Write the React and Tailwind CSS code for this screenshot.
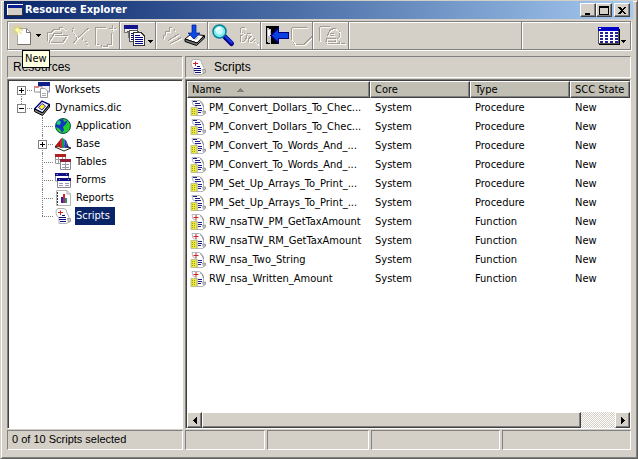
import React, { useState } from "react";

const toolIcon = "h-6 w-6 shrink-0";

/* ---------- toolbar icons ---------- */

// Disabled glyph: grey strokes with a white highlight below and to the right
const Embossed = ({ d, className = toolIcon }) => (
  <svg viewBox="0 0 24 24" className={className} fill="none" shapeRendering="crispEdges">
    <path d={d} stroke="#a19d96" />
    <path d={d} stroke="#f8f7f4" transform="translate(1 1)" />
  </svg>
);

const openPath = "M2.500 17V8.500H6L9 5.500H14V3.500H17L20.500 6M3.500 18.500L8 11.500H22.500L17.500 18.500H3.500M8.500 11V9.500H16.500V8";
const deletePath = "M3 4.500H5M3 6.500L8 13.500M19.500 4L13.500 9.500L8.500 14M8.500 14L4.500 19M13.500 14V16M16 17.500H18M17 20.500H19";
const addPath = "M13 3.500H2.500V20.500H6M14.500 20.500H18.500V9M19.500 1V7M16 4.500H23M8 20.500V22.500H14V20";
const comparePath = "M3.500 15V11H5L5.500 7.500H9.500V3.500H12M14.500 5V7M8 16.500L19.500 9.500M10 19.500L21.500 13.500";
const replacePath = "M5 3.500H8L9.500 5M4.500 4V8L8 9.500L4.500 12V17H8L10.500 14V11M11 9.500H14L15.500 12L12.500 15V17H16L18.500 14.500M18 17L22 20.500";
const exportPath = "M3 3.500H18M2.500 4V15L5 18.500V20.500H15L23.500 12";
const printPath = "M3 2.500H13M2.500 3V16H4M10.500 12L12.500 6.500H14M13 5.500L18 4.500L22.500 8V12L20.500 15M8 17.500H18.500V14.500H9.500V19.500H22M22 17V19.500H27V21M13 9.500H17M12 11.500H17";

const NewIcon = () => (
  <svg viewBox="0 0 24 24" className={toolIcon}>
    <path d="M5.500 4.500H14.500L18.500 8.500V20.500H5.500Z" fill="#fff" stroke="#aaa79f" />
    <path d="M14.500 4.500V8.500H18.500V20.500H5.500" fill="none" stroke="#77746e" />
    <path d="M5.500 1V11M0 6H11M1.500 2L9.500 10M9.500 2L1.500 10" stroke="#ddd545" />
    <path d="M5.500 3.500L8 6L5.500 8.500L3 6Z" fill="#ffffa0" />
  </svg>
);

const ResourceListIcon = () => (
  <svg viewBox="0 0 24 24" className={toolIcon} shapeRendering="crispEdges">
    <path d="M.5 1.500H13.500V13H4V8H.5Z" fill="#eee" stroke="#777" />
    <path d="M0 1H14V5H0Z" fill="#14148c" />
    <path d="M3 7.500H9M5 10.500H9" stroke="#555" />
    <path d="M5.500 6.500H13L16.500 10V17.500H5.500Z" fill="#fff" stroke="#555" />
    <path d="M9.500 8.500H17L20.500 12V21.500H9.500Z" fill="#fff" stroke="#333" />
    <path d="M7 9.500H9M7 11.500H9M7 13.500H9M7 15.500H9M11 11.500H16M11 13.500H19M11 15.500H19M11 17.500H19M11 19.500H19" stroke="#000080" />
  </svg>
);

const ImportIcon = () => (
  <svg viewBox="0 0 24 24" className={toolIcon}>
    <path d="M1 15L7 10L20 11.500L13 19Z" fill="#fff" stroke="#000" />
    <path d="M1 15V17.500L12.500 21.500L20.500 14V11.500L13 19Z" fill="#777" stroke="#000" />
    <path d="M7 14L10 12L15 13L12 16Z" fill="#c8c8c8" />
    <path d="M8 1H12V9H16L10 15L4 9H8Z" fill="#0a4be8" stroke="#00188f" strokeWidth=".7" />
  </svg>
);

const FindIcon = () => (
  <svg viewBox="0 0 24 24" className={toolIcon}>
    <path d="M13 13L19.500 19.500" stroke="#000080" strokeWidth="5" strokeLinecap="round" />
    <path d="M14 13L19.500 18.500" stroke="#1736e8" strokeWidth="2.500" strokeLinecap="round" />
    <circle cx="7.500" cy="7.500" r="6.500" fill="#7fe9f2" stroke="#087f93" strokeWidth="1.500" />
    <circle cx="7.500" cy="7" r="3.500" fill="#c9fbff" />
    <path d="M4 7Q5 3.500 8.500 4" stroke="#fff" strokeWidth="2" fill="none" />
  </svg>
);

const DoorIcon = () => (
  <svg viewBox="0 0 24 24" className={toolIcon} shapeRendering="crispEdges">
    <path d="M1 2H14V20H1Z" fill="#000" />
    <path d="M2 4L6 5V20L2 18Z" fill="#c4c4c4" />
    <path d="M3 6H5V12H3Z" fill="#fff" />
    <path d="M6 11.500L13 4.500V8.500H23V14.500H13V18.500Z" fill="#0a3fe0" stroke="#000080" />
  </svg>
);

const GridIcon = () => (
  <svg viewBox="0 0 24 20" className="h-5 w-6 shrink-0" shapeRendering="crispEdges">
    <path d="M1.500 1.500H21.500V17.500H1.500Z" fill="#fff" stroke="#555" />
    <path d="M1 1H22V5H1Z" fill="#0000c8" />
    <path d="M2 2.500H4" stroke="#fff" />
    <path d="M22.500 3V18.500H2" stroke="#000" fill="none" />
    <path d="M3 7H21M3 10H21M3 13H21M3 16H21" stroke="#20209a" strokeWidth="2" strokeDasharray="3 2" />
  </svg>
);

const DropArrow = () => (
  <svg viewBox="0 0 5 3" className="h-[3px] w-[5px]" shapeRendering="crispEdges">
    <path d="M0 0H5L2.500 3Z" fill="#000" />
  </svg>
);

/* ---------- resource icons ---------- */

const Icon16 = ({ children }) => (
  <svg viewBox="0 0 16 16" className="h-4 w-4 shrink-0">
    {children}
  </svg>
);

const WorksetsIcon = () => (
  <Icon16>
    <path d="M4.500 .5H15.500V10H4.500Z" fill="#eef" stroke="#889" />
    <path d="M4 0H16V4H4Z" fill="#102088" />
    <path d="M.5 4.500H8V10H.5Z" fill="#fff" stroke="#999" />
    <path d="M0 4H5V6H0Z" fill="#e08080" />
    <path d="M6.500 6.500H11L13.500 9V15.500H6.500Z" fill="#fff" stroke="#999" />
    <path d="M8 11.500H12M8 13.500H12" stroke="#aaa" />
  </Icon16>
);

const DictionaryIcon = () => (
  <Icon16>
    <path d="M.5 9L8 1L15.500 4.500L8.500 13Z" fill="#fff" stroke="#000080" strokeWidth="1.400" />
    <path d="M.5 9V11.500L8.500 15.500L15.500 7V4.500L8.500 13Z" fill="#888" stroke="#000" />
    <path d="M8 3.500L11.500 6L8 10L4.500 7.500Z" fill="#ffee22" stroke="#1c34b0" />
  </Icon16>
);

const ApplicationIcon = () => (
  <Icon16>
    <circle cx="8" cy="8" r="7.500" fill="#1fce2c" stroke="#1a4a60" />
    <path d="M4 2L8 1L9 4L13 2L11 6L8 9L9 12L7 15L5 11L1 9L1 6L5 7L6 4Z" fill="#1038c0" />
    <path d="M2 4L4 3L5 5L3 7Z" fill="#20c8c0" />
  </Icon16>
);

const BaseIcon = () => (
  <Icon16>
    <path d="M0 11L5 8L16 12L9 15Z" fill="#fff" stroke="#222" />
    <path d="M0 10.500L5 4.500V11Z" fill="#c01818" stroke="#400" strokeWidth=".5" />
    <path d="M5 12V3.500L7.500 1.500V12Z" fill="#d02828" />
    <path d="M7 12V2L9.500 3V12Z" fill="#12985a" />
    <path d="M9.500 12V3L11.500 5V12Z" fill="#2430c8" />
    <path d="M11.500 12V5L14 12Z" fill="#222266" />
  </Icon16>
);

const TablesIcon = () => (
  <Icon16>
    <path d="M.5 .5H10.500V9.500H.5Z" fill="#fff" stroke="#999" />
    <path d="M0 0H11V3H0Z" fill="#b02020" />
    <path d="M1 5.500H5M3.500 3V9M7.500 3V5" stroke="#999" />
    <path d="M5.500 5.500H15.500V15.500H5.500Z" fill="#fff" stroke="#889" />
    <path d="M5 5H16V8H5Z" fill="#8f2038" />
    <path d="M7 10.500H14M7 13.500H14M10.500 8V15" stroke="#99a" />
  </Icon16>
);

const FormsIcon = () => (
  <Icon16>
    <path d="M.5 1.500H13.500V9H.5Z" fill="#fff" stroke="#889" />
    <path d="M0 1H14V4H0Z" fill="#101080" />
    <path d="M2.500 6.500H15.500V15.500H2.500Z" fill="#fff" stroke="#889" />
    <path d="M2 6H16V9H2Z" fill="#101080" />
    <path d="M4 11.500H8M10 11.500H14M4 13.500H8M10 13.500H14M1.500 2.500H3M11 2.500H12M4 7.500H5M13 7.500H14" stroke="#8f99b8" />
  </Icon16>
);

const ReportsIcon = () => (
  <Icon16>
    <path d="M1.500 .5H12L15.500 4V15.500H1.500Z" fill="#fff" stroke="#b4b4b4" />
    <path d="M12 .5V4H15.500" fill="none" stroke="#aaa" />
    <path d="M2.500 2V15" stroke="#333" strokeDasharray="2 1" />
    <path d="M6 7H8V13H6Z" fill="#1428c8" />
    <path d="M8 4H10V13H8Z" fill="#e02020" />
    <path d="M10 8H12V13H10Z" fill="#0f9a8a" />
  </Icon16>
);

const ScriptsIcon = () => (
  <Icon16>
    <path d="M3 .5H9Q12 1 12 5L14 9V13L12 15.500H4V10L1.500 7Q0 2 3 .5Z" fill="#fff" stroke="#b0b0b4" />
    <path d="M5.500 2.500V7M3 4.500H8" stroke="#d02020" />
    <path d="M7 7.500H10M4 9.500H11M4 11.500H11M5 13.500H11" stroke="#101080" />
    <path d="M12.500 10.500H15.500V13.500L13.500 14.500Z" fill="#ccc" stroke="#888" strokeWidth=".7" />
  </Icon16>
);

const ScriptItemIcon = ({ kind }) => (
  <Icon16>
    <path d="M2 .5H9.500Q13 2 13.500 6V11H15.500V13L13 15.500H7V7L3 5Z" fill="#fff" stroke="#b4b4bc" />
    {kind === "Procedure" ? (
      <path d="M3 1.500H7M5 3.500H10M5 5.500H11M8 8.500H12M8 10.500H12M8 12.500H11" stroke="#20208c" />
    ) : (
      <>
        <path d="M6 1V6M3.500 3.500H8.500" stroke="#d02020" />
        <path d="M8 8.500H12M8 10.500H12M8 12.500H11" stroke="#20208c" />
      </>
    )}
    <path d="M10 1.500Q13 3 13.500 7" fill="none" stroke="#8a8a94" />
    <path d="M1 7.500H7V15.500H1Z" fill="#eeea40" stroke="#a8a878" strokeWidth=".7" />
    <path d="M2 9.500H6M2 11.500H6M2 13.500H6" stroke="#9a9c14" strokeDasharray="1 1" />
    <path d="M12.500 11.500H15.500V13L13.500 14.500Z" fill="#c4c4cc" stroke="#888" strokeWidth=".6" />
  </Icon16>
);

/* ---------- data ---------- */

const resources = [
  { name: "Worksets", level: 0, icon: WorksetsIcon, expander: "+", first: true },
  { name: "Dynamics.dic", level: 0, icon: DictionaryIcon, expander: "-", last: true },
  { name: "Application", level: 1, icon: ApplicationIcon },
  { name: "Base", level: 1, icon: BaseIcon, expander: "+" },
  { name: "Tables", level: 1, icon: TablesIcon },
  { name: "Forms", level: 1, icon: FormsIcon },
  { name: "Reports", level: 1, icon: ReportsIcon },
  { name: "Scripts", level: 1, icon: ScriptsIcon, last: true },
];

const scripts = [
  { name: "PM_Convert_Dollars_To_Chec...", type: "Procedure" },
  { name: "PM_Convert_Dollars_To_Chec...", type: "Procedure" },
  { name: "PM_Convert_To_Words_And_...", type: "Procedure" },
  { name: "PM_Convert_To_Words_And_...", type: "Procedure" },
  { name: "PM_Set_Up_Arrays_To_Print_...", type: "Procedure" },
  { name: "PM_Set_Up_Arrays_To_Print_...", type: "Procedure" },
  { name: "RW_nsaTW_PM_GetTaxAmount", type: "Function" },
  { name: "RW_nsaTW_RM_GetTaxAmount", type: "Function" },
  { name: "RW_nsa_Two_String", type: "Function" },
  { name: "RW_nsa_Written_Amount", type: "Function" },
];

/* ---------- building blocks ---------- */

const raised =
  "bg-[#d4d0c8] border border-t-white border-l-white border-r-[#404040] border-b-[#404040] shadow-[inset_-1px_-1px_0_#808080]";
const sunken = "border border-t-[#808080] border-l-[#808080] border-r-white border-b-white";
const well = "border border-t-[#808080] border-l-[#808080] border-r-white border-b-white bg-white";

const WindowButton = ({ label, children }) => (
  <button aria-label={label} className={`flex h-[14px] w-4 items-center justify-center ${raised}`}>
    <svg viewBox="0 0 10 9" className="h-[9px] w-[10px]" shapeRendering="crispEdges">
      {children}
    </svg>
  </button>
);

const ToolGroup = ({ className, children }) => (
  <div className={`flex items-center border-l border-[#808080] pl-1 shadow-[inset_1px_0_0_#fff] ${className}`}>
    {children}
  </div>
);

const ToolButton = ({ label, menu, disabled, children }) => (
  <button aria-label={label} disabled={disabled} className="flex shrink-0 items-center">
    {children}
    {menu && (
      <span className={menu === "low" ? "pt-3" : ""}>
        <DropArrow />
      </span>
    )}
  </button>
);

const Guide = ({ item }) => (
  <span className="relative flex h-[18px] w-[21px] shrink-0 items-center pl-1">
    <span
      className={`absolute left-2 border-l border-dotted border-[#808080] ${
        item.first ? "top-[9px] h-[9px]" : item.last ? "top-0 h-[9px]" : "top-0 h-[18px]"
      }`}
    />
    <span className="absolute left-2 top-[9px] w-[11px] border-t border-dotted border-[#808080]" />
    {item.expander && (
      <svg viewBox="0 0 9 9" className="relative h-[9px] w-[9px]" shapeRendering="crispEdges">
        <path d="M.5 .5H8.500V8.500H.5Z" fill="#fff" stroke="#808080" />
        <path d={item.expander === "+" ? "M2 4.500H7M4.500 2V7" : "M2 4.500H7"} stroke="#000" />
      </svg>
    )}
  </span>
);

const ResourceTree = ({ selected, onSelect }) => (
  <ul className={`${well} min-h-0 flex-1 overflow-hidden pl-[5px] pt-px shadow-[inset_1px_1px_0_#404040]`}>
    {resources.map((item) => {
      const ItemIcon = item.icon;
      return (
        <li key={item.name} className="flex h-[18px] items-center">
          {item.level === 1 && <span className="w-[21px] shrink-0" />}
          <Guide item={item} />
          <button onClick={() => onSelect(item.name)} className="flex h-[18px] items-center gap-1">
            <ItemIcon />
            <span
              className={`h-[18px] px-px leading-[18px] ${
                selected === item.name ? "bg-[#0a246a] pr-[5px] text-white" : ""
              }`}
            >
              {item.name}
            </span>
          </button>
        </li>
      );
    })}
  </ul>
);

const th = `h-[17px] p-0 pl-1 text-left font-normal leading-[15px] border border-t-white border-l-white border-r-[#404040] border-b-[#404040] bg-[#c1beb3] shadow-[inset_-1px_-1px_0_#808080]`;

const ScriptTable = () => (
  <table className="w-full table-fixed border-separate border-spacing-0">
    <colgroup>
      <col className="w-[183px]" />
      <col className="w-[100px]" />
      <col className="w-[100px]" />
      <col />
    </colgroup>
    <thead>
      <tr>
        <th className={th}>
          <span className="flex items-center gap-4">
            Name
            <svg viewBox="0 0 7 4" className="h-1 w-[7px]" shapeRendering="crispEdges">
              <path d="M0 4H7L3.500 0Z" fill="#808080" />
            </svg>
          </span>
        </th>
        <th className={th}>Core</th>
        <th className={th}>Type</th>
        <th className={`${th} whitespace-nowrap`}>SCC State</th>
      </tr>
    </thead>
    <tbody>
      {scripts.map((script, i) => (
        <tr key={i} className="h-[19px]">
          <td className="p-0 pl-[3px]">
            <span className="flex items-center gap-[3px] whitespace-nowrap">
              <ScriptItemIcon kind={script.type} />
              {script.name}
            </span>
          </td>
          <td className="p-0 pl-[5px]">System</td>
          <td className="p-0 pl-[5px]">{script.type}</td>
          <td className="p-0 pl-[5px]">New</td>
        </tr>
      ))}
    </tbody>
  </table>
);

const ScrollBar = () => (
  <div className="flex h-4 bg-[repeating-conic-gradient(#fff_0_25%,#d4d0c8_0_50%)] bg-[length:2px_2px]">
    <button aria-label="Scroll left" className={`flex w-[15px] items-center justify-center ${raised}`}>
      <svg viewBox="0 0 4 7" className="h-[7px] w-1" shapeRendering="crispEdges">
        <path d="M4 0V7L0 3.500Z" />
      </svg>
    </button>
    <div className="flex flex-1">
      <div className={`w-11/12 ${raised}`} />
    </div>
    <button aria-label="Scroll right" className={`flex w-[15px] items-center justify-center ${raised}`}>
      <svg viewBox="0 0 4 7" className="h-[7px] w-1" shapeRendering="crispEdges">
        <path d="M0 0V7L4 3.500Z" />
      </svg>
    </button>
  </div>
);

const App = () => {
  const [selected, setSelected] = useState("Scripts");

  return (
    <div className="flex h-screen flex-col border border-t-[#d4d0c8] border-l-[#d4d0c8] border-r-[#606060] border-b-[#606060] bg-[#d4d0c8] pb-2 pl-[3px] pr-1 font-['DejaVu_Sans_Condensed','DejaVu_Sans',sans-serif] text-[11px] leading-4 text-black shadow-[inset_1px_1px_0_#fff,inset_-1px_-1px_0_#808080]">
      {/* Title bar */}
      <header className="flex h-[18px] shrink-0 items-center bg-linear-to-r from-[#0a246a] to-[#a6caf0] pl-[3px] pr-[3px]">
        <svg viewBox="0 0 16 12" className="mr-[2px] h-3 w-4" shapeRendering="crispEdges">
          <path d="M.5 .5H15.500V11.500H.5Z" fill="#d4d0c8" stroke="#fff" />
          <path d="M1 1H15V4H1Z" fill="#0a1c90" />
          <path d="M15.500 1V11.500H0" stroke="#333" fill="none" />
        </svg>
        <h1 className="flex-1 font-bold leading-[18px] text-white">Resource Explorer</h1>
        <WindowButton label="Minimize">
          <path d="M2 7H7V9H2Z" />
        </WindowButton>
        <WindowButton label="Maximize">
          <path d="M.5 .5H9.500V8.500H.5ZM0 1.500H10" fill="none" stroke="#000" />
        </WindowButton>
        <span className="w-[2px]" />
        <WindowButton label="Close">
          <path d="M1 1H3L5 3L7 1H9L6 4.500L9 8H7L5 6L3 8H1L4 4.500Z" />
        </WindowButton>
      </header>

      <div className="flex min-h-0 flex-1 flex-col pl-[3px] pr-[2px] pt-[2px]">
        {/* Toolbar */}
        <div className="flex h-[29px] shrink-0 border-y border-r border-[#808080] shadow-[1px_1px_0_#fff,inset_0_1px_0_#fff]">
          <ToolGroup className="relative w-[112px]">
            <ToolButton label="New" menu="mid">
              <NewIcon />
            </ToolButton>
            <span className="w-1" />
            <ToolButton label="Open" disabled>
              <Embossed d={openPath} />
            </ToolButton>
            <ToolButton label="Delete" disabled>
              <Embossed d={deletePath} />
            </ToolButton>
            <ToolButton label="Add" disabled>
              <Embossed d={addPath} />
            </ToolButton>
            <span
              role="tooltip"
              className="absolute left-[14px] top-7 z-10 h-[18px] border border-black bg-[#ffffe1] px-[2px] leading-4"
            >
              New
            </span>
          </ToolGroup>
          <ToolGroup className="w-9">
            <ToolButton label="Resource list" menu="low">
              <ResourceListIcon />
            </ToolButton>
          </ToolGroup>
          <ToolGroup className="w-[52px]">
            <ToolButton label="Compare" disabled>
              <Embossed d={comparePath} />
            </ToolButton>
            <ToolButton label="Import">
              <ImportIcon />
            </ToolButton>
          </ToolGroup>
          <ToolGroup className="w-[53px]">
            <ToolButton label="Find">
              <FindIcon />
            </ToolButton>
            <ToolButton label="Replace" disabled>
              <Embossed d={replacePath} />
            </ToolButton>
          </ToolGroup>
          <ToolGroup className="w-[52px]">
            <ToolButton label="Check in">
              <DoorIcon />
            </ToolButton>
            <ToolButton label="Check out" disabled>
              <Embossed d={exportPath} />
            </ToolButton>
          </ToolGroup>
          <ToolGroup className="w-9">
            <button aria-label="Print" disabled className="shrink-0">
              <svg viewBox="0 0 30 24" className="h-6 w-[30px]" fill="none" shapeRendering="crispEdges">
                <path d={printPath} stroke="#a19d96" />
                <path d={printPath} stroke="#f8f7f4" transform="translate(1 1)" />
              </svg>
            </button>
          </ToolGroup>
          <ToolGroup className="flex-1" />
          <ToolGroup className="w-[109px] justify-end pr-1">
            <ToolButton label="View" menu="low">
              <GridIcon />
            </ToolButton>
          </ToolGroup>
        </div>

        {/* Panes */}
        <div className="flex min-h-0 flex-1 gap-[2px] pt-[6px]">
          <section className="flex w-44 shrink-0 flex-col gap-px">
            <h2 className={`${sunken} h-[22px] pl-[5px] font-['Liberation_Sans',Arial,sans-serif] text-[12px] leading-5`}>
              Resources
            </h2>
            <ResourceTree selected={selected} onSelect={setSelected} />
          </section>
          <section className="flex min-w-0 flex-1 flex-col gap-px">
            <h2
              className={`${sunken} flex h-[22px] items-center gap-2 pl-1 font-['Liberation_Sans',Arial,sans-serif] text-[12px] leading-5`}
            >
              <ScriptsIcon />
              Scripts
            </h2>
            <div className={`${well} flex min-h-0 flex-1 flex-col pl-px pt-px shadow-[inset_1px_1px_0_#404040]`}>
              <div className="min-h-0 flex-1 overflow-hidden">
                <ScriptTable />
              </div>
              <ScrollBar />
            </div>
          </section>
        </div>

        {/* Status bar */}
        <footer className="flex h-[21px] shrink-0 gap-[2px] pt-px font-['Liberation_Sans',Arial,sans-serif] text-[11px] leading-4">
          <p className={`${sunken} w-44 pl-1`}>0 of 10 Scripts selected</p>
          <div className={`${sunken} w-20`} />
          <div className={`${sunken} w-[102px]`} />
          <div className={`${sunken} w-[129px]`} />
          <div className={`${sunken} flex-1`} />
        </footer>
      </div>
    </div>
  );
};

export default App;
